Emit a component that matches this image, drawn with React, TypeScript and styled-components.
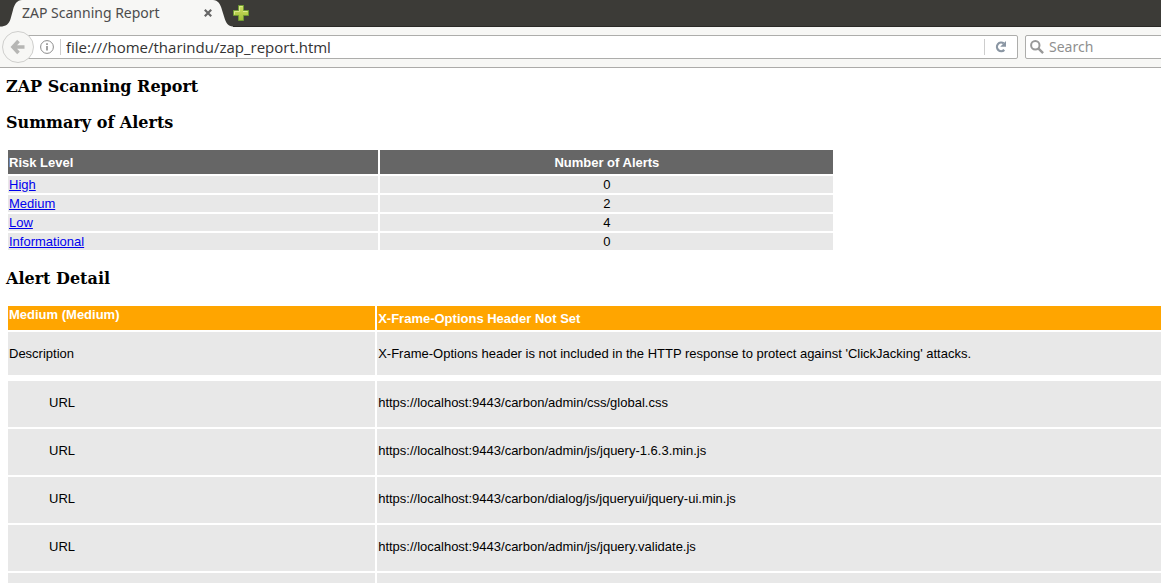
import React from "react";
import styled, { createGlobalStyle } from "styled-components";

const uiFont = `"Noto Sans", "Open Sans", sans-serif`;
const addressFont = `"Open Sans", "Noto Sans", sans-serif`;

const GlobalStyle = createGlobalStyle`
  *, *::before, *::after { box-sizing: border-box; }
  body { margin: 0; background: #fff; }
`;

const Browser = styled.div`
  display: flex;
  flex-direction: column;
  height: 100vh;
  overflow: hidden;
`;

const TabBar = styled.div`
  display: flex;
  height: 27px;
  background: #3c3b37;
  box-shadow: inset 0 -1px 0 #2a2926;
`;

const TabEdge = styled.svg`
  display: block;
  flex: none;
  height: 27px;
`;

const Tab = styled.div`
  display: flex;
  align-items: flex-start;
  justify-content: space-between;
  width: 191px;
  height: 27px;
  background: #f7f7f5;
  font: 14px/26px ${uiFont};
  color: #4c4c4c;
`;

const IconButton = styled.button`
  display: flex;
  align-items: center;
  justify-content: center;
  flex: none;
  padding: 0;
  border: 0;
  background: none;
`;

const CloseButton = styled(IconButton)`
  width: 10px;
  height: 26px;
`;

const NewTabButton = styled(IconButton)`
  width: 18px;
  height: 26px;
  margin-left: -5px;
`;

const Toolbar = styled.div`
  display: flex;
  align-items: center;
  flex: none;
  height: 41px;
  padding-left: 2px;
  background: #f7f7f5;
  border-bottom: 1px solid #acaba9;
`;

const BackButton = styled(IconButton)`
  position: relative;
  z-index: 1;
  width: 32px;
  height: 32px;
  border: 1px solid #cfcfcd;
  border-radius: 50%;
  background: #f7f7f5;
`;

const Field = styled.div`
  display: flex;
  align-items: center;
  height: 24px;
  border: 1px solid #adadab;
  border-radius: 2px;
  background: #fff;
`;

const AddressField = styled(Field)`
  flex: 1;
  min-width: 0;
  margin-left: -10px;
  padding-left: 15px;
`;

const SearchField = styled(Field)`
  flex: none;
  width: 140px;
  margin: 0 -4px 0 7px;
  padding-left: 4px;
`;

const InfoButton = styled(IconButton)`
  margin-right: 6px;
`;

const Divider = styled.span`
  flex: none;
  width: 1px;
  height: 16px;
  background: #cdcdcd;
`;

const FieldInput = styled.input`
  flex: 1;
  min-width: 0;
  height: 22px;
  padding: 0 5px;
  border: 0;
  outline: 0;
  background: none;
  font: 14px/22px ${uiFont};
  color: #333;

  &::placeholder {
    color: #8f8f8f;
    opacity: 1;
  }
`;

const AddressInput = styled(FieldInput)`
  font: 15px/22px ${addressFont};
`;

const ReloadButton = styled(IconButton)`
  width: 32px;
  height: 22px;
`;

const Report = styled.main`
  flex: 1;
  min-height: 0;
  overflow: hidden;
  padding: 8px 0 0 6px;
  font: 13px/15px "Liberation Sans", Arial, sans-serif;
  color: #000;
`;

const Heading = styled.h3`
  margin: 0 0 14px;
  font: bold 16px/22px "DejaVu Serif", serif;
`;

const Table = styled.table`
  table-layout: fixed;
  border-collapse: separate;
  border-spacing: 2px;
`;

const SummaryTable = styled(Table)`
  width: 71.8%;
  margin-bottom: 16px;
`;

const DetailTable = styled(Table)`
  width: calc(100% + 2px);
`;

const HeaderCell = styled.th<{ $tone: string; $width?: string; $align?: string; $valign?: string }>`
  width: ${(p) => p.$width ?? "auto"};
  height: 24px;
  padding: 1px;
  background: ${(p) => p.$tone};
  color: #fff;
  text-align: ${(p) => p.$align ?? "left"};
  vertical-align: ${(p) => p.$valign ?? "middle"};
`;

const Cell = styled.td<{ $height?: number; $align?: string }>`
  height: ${(p) => p.$height ?? 17}px;
  padding: 1px;
  background: #e8e8e8;
  text-align: ${(p) => p.$align ?? "left"};
`;

const UrlCell = styled(Cell)<{ $indent?: boolean }>`
  height: 46px;
  padding: 1px 1px 5px ${(p) => (p.$indent ? 41 : 1)}px;
`;

const SpacerCell = styled.td`
  height: 2px;
  padding: 0;
`;

const RiskLink = styled.a`
  color: #0000ee;
  text-decoration: underline;
`;

const summary = [
  { level: "High", count: 0 },
  { level: "Medium", count: 2 },
  { level: "Low", count: 4 },
  { level: "Informational", count: 0 },
];

const urls = [
  "https://localhost:9443/carbon/admin/css/global.css",
  "https://localhost:9443/carbon/admin/js/jquery-1.6.3.min.js",
  "https://localhost:9443/carbon/dialog/js/jqueryui/jquery-ui.min.js",
  "https://localhost:9443/carbon/admin/js/jquery.validate.js",
  "",
];

export default function App() {
  return (
    <>
      <GlobalStyle />
      <Browser>
        <TabBar>
          <TabEdge width="22" viewBox="0 0 22 27" aria-hidden="true">
            <path d="M0 27V26.500C6 26.500 9 24 10.500 19L13 10C14.500 4 17 .3 22 0V27Z" fill="#f7f7f5" />
          </TabEdge>
          <Tab>
            <span>ZAP Scanning Report</span>
            <CloseButton aria-label="Close tab">
              <svg width="8" height="8" viewBox="0 0 8 8">
                <path d="M.8 .8l6.400 6.400M7.200 .8L.8 7.200" stroke="#666" strokeWidth="2.200" />
              </svg>
            </CloseButton>
          </Tab>
          <TabEdge width="24" viewBox="0 0 24 27" aria-hidden="true">
            <path d="M0 0C5 .3 7.500 4 9 10L11.500 18C13 23 15 26 20 26.500V27H0Z" fill="#f7f7f5" />
          </TabEdge>
          <NewTabButton aria-label="New tab">
            <svg width="16" height="16" viewBox="0 0 16 16">
              <defs>
                <linearGradient id="plus" x1="0" y1="0" x2="0" y2="1">
                  <stop offset="0" stopColor="#cfdf62" />
                  <stop offset="1" stopColor="#a0bf38" />
                </linearGradient>
              </defs>
              <path
                d="M5.500 .5h5v5h5v5h-5v5h-5v-5h-5v-5h5z"
                fill="url(#plus)"
                stroke="#6f9a32"
              />
              <path d="M6.500 6.500v-5h3M1.500 9.500v-3h5M10 6.500h4.500" fill="none" stroke="#dcea8c" />
            </svg>
          </NewTabButton>
        </TabBar>
        <Toolbar>
          <BackButton aria-label="Back">
            <svg width="16" height="16" viewBox="0 0 16 16">
              <path d="M8.500 2L3 8l5.500 6M3.500 8H14.500" fill="none" stroke="#b6b6b4" strokeWidth="3.600" />
            </svg>
          </BackButton>
          <AddressField>
            <InfoButton aria-label="Site information">
              <svg width="14" height="14" viewBox="0 0 14 14">
                <circle cx="7" cy="7" r="6.400" fill="none" stroke="#8c8c8c" />
                <path d="M7 6v4.500M7 3.200v1.800" stroke="#8c8c8c" strokeWidth="1.600" />
              </svg>
            </InfoButton>
            <Divider />
            <AddressInput aria-label="Address" defaultValue="file:///home/tharindu/zap_report.html" />
            <Divider />
            <ReloadButton aria-label="Reload">
              <svg width="14" height="14" viewBox="0 0 14 14">
                <path d="M9.800 3.400A4.300 4.300 0 1 0 10.300 9.900" fill="none" stroke="#8a96a3" strokeWidth="2.200" />
                <path d="M12 1v5.800H6.200z" fill="#8a96a3" />
              </svg>
            </ReloadButton>
          </AddressField>
          <SearchField>
            <svg width="14" height="14" viewBox="0 0 14 14" aria-hidden="true">
              <circle cx="5.300" cy="5.300" r="4.200" fill="none" stroke="#989898" strokeWidth="2" />
              <path d="M8.300 8.300l4.800 4.800" stroke="#989898" strokeWidth="2.400" />
            </svg>
            <FieldInput aria-label="Search" placeholder="Search" />
          </SearchField>
        </Toolbar>
        <Report>
          <Heading as="h1">ZAP Scanning Report</Heading>
          <Heading>Summary of Alerts</Heading>
          <SummaryTable>
            <thead>
              <tr>
                <HeaderCell $tone="#666666" $width="45%">Risk Level</HeaderCell>
                <HeaderCell $tone="#666666" $align="center">Number of Alerts</HeaderCell>
              </tr>
            </thead>
            <tbody>
              {summary.map((row) => (
                <tr key={row.level}>
                  <Cell>
                    <RiskLink href={`#${row.level.toLowerCase()}`}>{row.level}</RiskLink>
                  </Cell>
                  <Cell $align="center">{row.count}</Cell>
                </tr>
              ))}
            </tbody>
          </SummaryTable>
          <Heading>Alert Detail</Heading>
          <DetailTable>
            <thead>
              <tr>
                <HeaderCell $tone="#ffa500" $width="31.9%" $valign="top">Medium (Medium)</HeaderCell>
                <HeaderCell $tone="#ffa500">X-Frame-Options Header Not Set</HeaderCell>
              </tr>
            </thead>
            <tbody>
              <tr>
                <Cell $height={43}>Description</Cell>
                <Cell $height={43}>
                  X-Frame-Options header is not included in the HTTP response to protect against
                  'ClickJacking' attacks.
                </Cell>
              </tr>
              <tr>
                <SpacerCell colSpan={2} />
              </tr>
              {urls.map((url, i) => (
                <tr key={i}>
                  <UrlCell $indent>{url && "URL"}</UrlCell>
                  <UrlCell>{url}</UrlCell>
                </tr>
              ))}
            </tbody>
          </DetailTable>
        </Report>
      </Browser>
    </>
  );
}
